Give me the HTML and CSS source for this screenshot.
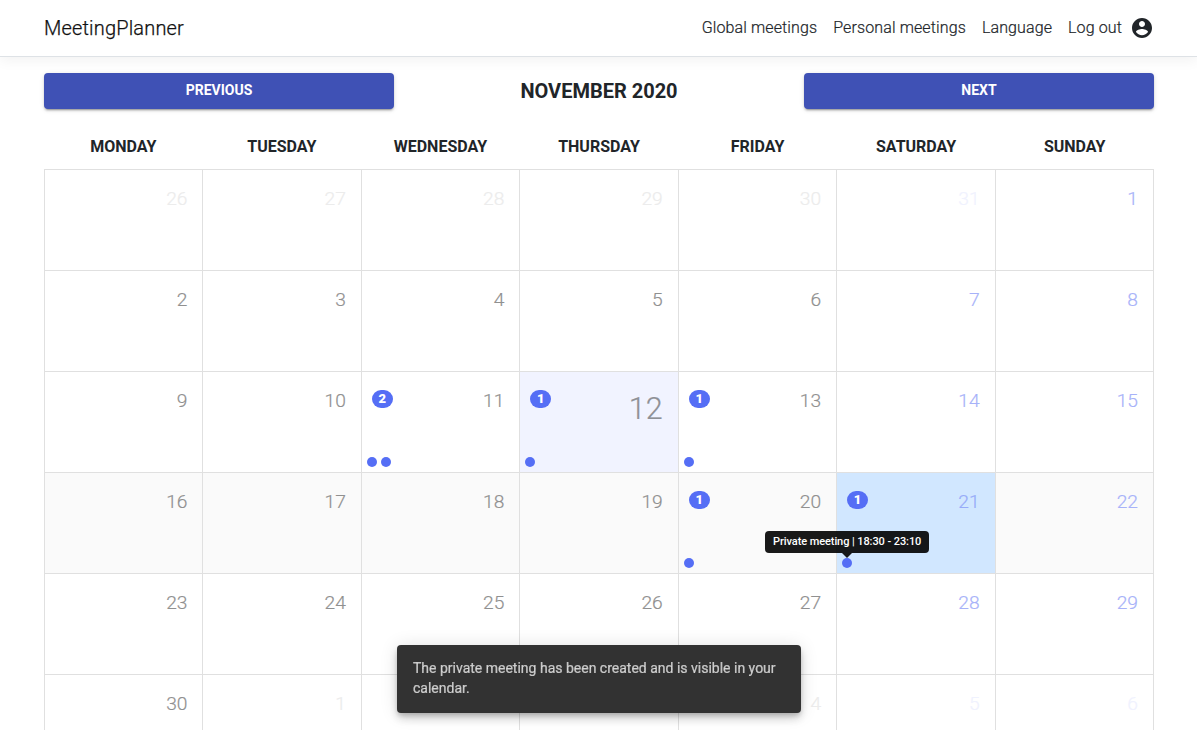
FILE: index.html
```html
<!DOCTYPE html>
<html lang="en">
<head>
<meta charset="utf-8">
<title>MeetingPlanner</title>
<link rel="stylesheet" href="styles.css">
</head>
<body>
<header class="navbar">
  <a class="brand">MeetingPlanner</a>
  <nav class="links">
    <a>Global meetings</a>
    <a>Personal meetings</a>
    <a>Language</a>
    <a>Log out</a>
    <svg class="account" viewBox="0 0 24 24"><path d="M12 2C6.48 2 2 6.48 2 12s4.48 10 10 10 10-4.48 10-10S17.52 2 12 2zm0 3c1.66 0 3 1.34 3 3s-1.34 3-3 3-3-1.34-3-3 1.34-3 3-3zm0 14.2c-2.5 0-4.71-1.28-6-3.22.03-1.99 4-3.08 6-3.08 1.99 0 5.97 1.09 6 3.08-1.29 1.94-3.5 3.22-6 3.22z"/></svg>
  </nav>
</header>
<main class="container">
  <div class="toolbar">
    <button class="btn">PREVIOUS</button>
    <h1 class="month">NOVEMBER 2020</h1>
    <button class="btn">NEXT</button>
  </div>
  <div class="weekdays">
    <span>MONDAY</span><span>TUESDAY</span><span>WEDNESDAY</span><span>THURSDAY</span><span>FRIDAY</span><span>SATURDAY</span><span>SUNDAY</span>
  </div>
  <div class="calendar">
    <div class="week">
      <div class="day other"><span class="num">26</span></div>
      <div class="day other"><span class="num">27</span></div>
      <div class="day other"><span class="num">28</span></div>
      <div class="day other"><span class="num">29</span></div>
      <div class="day other"><span class="num">30</span></div>
      <div class="day weekend other"><span class="num">31</span></div>
      <div class="day weekend"><span class="num">1</span></div>
    </div>
    <div class="week">
      <div class="day"><span class="num">2</span></div>
      <div class="day"><span class="num">3</span></div>
      <div class="day"><span class="num">4</span></div>
      <div class="day"><span class="num">5</span></div>
      <div class="day"><span class="num">6</span></div>
      <div class="day weekend"><span class="num">7</span></div>
      <div class="day weekend"><span class="num">8</span></div>
    </div>
    <div class="week">
      <div class="day"><span class="num">9</span></div>
      <div class="day"><span class="num">10</span></div>
      <div class="day"><span class="badge">2</span><span class="num">11</span><div class="dots"><i class="dot"></i><i class="dot"></i></div></div>
      <div class="day today"><span class="badge">1</span><span class="num">12</span><div class="dots"><i class="dot"></i></div></div>
      <div class="day"><span class="badge">1</span><span class="num">13</span><div class="dots"><i class="dot"></i></div></div>
      <div class="day weekend"><span class="num">14</span></div>
      <div class="day weekend"><span class="num">15</span></div>
    </div>
    <div class="week active">
      <div class="day"><span class="num">16</span></div>
      <div class="day"><span class="num">17</span></div>
      <div class="day"><span class="num">18</span></div>
      <div class="day"><span class="num">19</span></div>
      <div class="day"><span class="badge">1</span><span class="num">20</span><div class="dots"><i class="dot"></i></div></div>
      <div class="day weekend selected"><span class="badge">1</span><span class="num">21</span><div class="dots"><i class="dot"><span class="tooltip">Private meeting | 18:30 - 23:10</span></i></div></div>
      <div class="day weekend"><span class="num">22</span></div>
    </div>
    <div class="week">
      <div class="day"><span class="num">23</span></div>
      <div class="day"><span class="num">24</span></div>
      <div class="day"><span class="num">25</span></div>
      <div class="day"><span class="num">26</span></div>
      <div class="day"><span class="num">27</span></div>
      <div class="day weekend"><span class="num">28</span></div>
      <div class="day weekend"><span class="num">29</span></div>
    </div>
    <div class="week last">
      <div class="day"><span class="num">30</span></div>
      <div class="day other"><span class="num">1</span></div>
      <div class="day other"></div>
      <div class="day other"></div>
      <div class="day other"><span class="num">4</span></div>
      <div class="day weekend other"><span class="num">5</span></div>
      <div class="day weekend other"><span class="num">6</span></div>
    </div>
  </div>
</main>
<div class="snackbar">The private meeting has been created and is visible in your calendar.</div>
</body>
</html>
```
FILE: styles.css
```css
* { box-sizing: border-box; }

body {
  margin: 0;
  height: 730px;
  overflow: hidden;
  background: #fff;
  color: #212529;
  font: 300 16px/24px Roboto, sans-serif;
}

.navbar {
  display: flex;
  justify-content: space-between;
  align-items: center;
  height: 57px;
  padding: 0 43px 0 44px;
  border-bottom: 1px solid #dee2e6;
  box-shadow: 0 4px 12px rgba(0, 0, 0, .05);
}

.brand {
  font-size: 20px;
  line-height: 30px;
  color: #111;
  letter-spacing: .17px;
  -webkit-text-stroke: .25px;
}

.links { display: flex; align-items: center; gap: 16px; }
.links a { padding-bottom: 1px; letter-spacing: .12px; -webkit-text-stroke: .2px; }

.account { width: 24px; height: 24px; margin-left: -8px; fill: #212529; }

.container { width: 1110px; margin: 0 0 0 44px; }

.toolbar {
  display: grid;
  grid-template-columns: 350px 1fr 350px;
  align-items: start;
  padding-top: 16px;
}

.btn {
  height: 36px;
  padding: 0 0 2px;
  border: 0;
  border-radius: 4px;
  background: #3f51b5;
  color: #fff;
  font: 700 14px/34px Roboto, sans-serif;
  box-shadow: 0 3px 1px -2px rgba(0, 0, 0, .2), 0 2px 2px rgba(0, 0, 0, .14), 0 1px 5px rgba(0, 0, 0, .12);
}

.month {
  margin: 0;
  text-align: center;
  font-size: 20px;
  line-height: 36px;
  font-weight: 700;
}

.weekdays {
  display: grid;
  grid-template-columns: repeat(7, 1fr);
  padding-top: 26px;
  height: 60px;
  text-align: center;
  font-weight: 700;
}

.calendar { border: solid #e0e0e0; border-width: 1px 0 0 1px; }

.week { display: grid; grid-template-columns: repeat(7, 1fr); }
.week.active { background: #fafafa; }

.day {
  position: relative;
  display: flex;
  justify-content: flex-end;
  align-items: flex-start;
  height: 101px;
  padding: 16px 15px 0 10px;
  border: solid #e0e0e0;
  border-width: 0 1px 1px 0;
}

.last .day { height: 56px; border-bottom: 0; }

.num {
  padding-top: 1px;
  font-size: 19.2px;
  line-height: 24px;
  color: #909090;
  -webkit-text-stroke: .2px;
}
.other .num { color: #ececec; }
.weekend .num { color: #a7b2f9; }
.weekend.other .num { color: #f0f2fe; }

.today { background: #f1f3ff; }
.today .num { padding-top: 0; font-size: 30.5px; line-height: 42px; color: #8e9096; }
.selected { background: #d1e7ff; }
.selected .num { color: #97abf9; }

.badge {
  min-width: 21px;
  height: 18px;
  margin: 2px auto 0 0;
  border-radius: 9px;
  background: #556ef5;
  color: #fff;
  text-align: center;
  font-size: 13px;
  line-height: 18px;
  font-weight: 900;
}

.dots { position: absolute; left: 5px; bottom: 5px; display: flex; gap: 4px; }

.dot { position: relative; width: 10px; height: 10px; border-radius: 50%; background: #556ef5; }

.tooltip {
  position: absolute;
  z-index: 2;
  left: 50%;
  bottom: 15px;
  transform: translateX(-50%);
  width: 164px;
  height: 22px;
  border-radius: 4px;
  background: rgba(0, 0, 0, .9);
  color: #fff;
  text-align: center;
  white-space: nowrap;
  font: 500 11px/21px Roboto, sans-serif;
  letter-spacing: -.08px;
}

.tooltip::after {
  content: "";
  position: absolute;
  top: 100%;
  left: 50%;
  margin-left: -5px;
  border: 5px solid transparent;
  border-bottom: 0;
  border-top-color: rgba(0, 0, 0, .9);
}

.snackbar {
  position: fixed;
  left: 397px;
  bottom: 17px;
  width: 404px;
  height: 68px;
  padding: 13px 16px;
  border-radius: 4px;
  background: #323232;
  color: rgba(255, 255, 255, .7);
  font: 400 14px/20px Roboto, sans-serif;
  -webkit-text-stroke: .2px;
  box-shadow: 0 3px 5px -1px rgba(0, 0, 0, .2), 0 6px 10px rgba(0, 0, 0, .14), 0 1px 18px rgba(0, 0, 0, .12);
}
```
